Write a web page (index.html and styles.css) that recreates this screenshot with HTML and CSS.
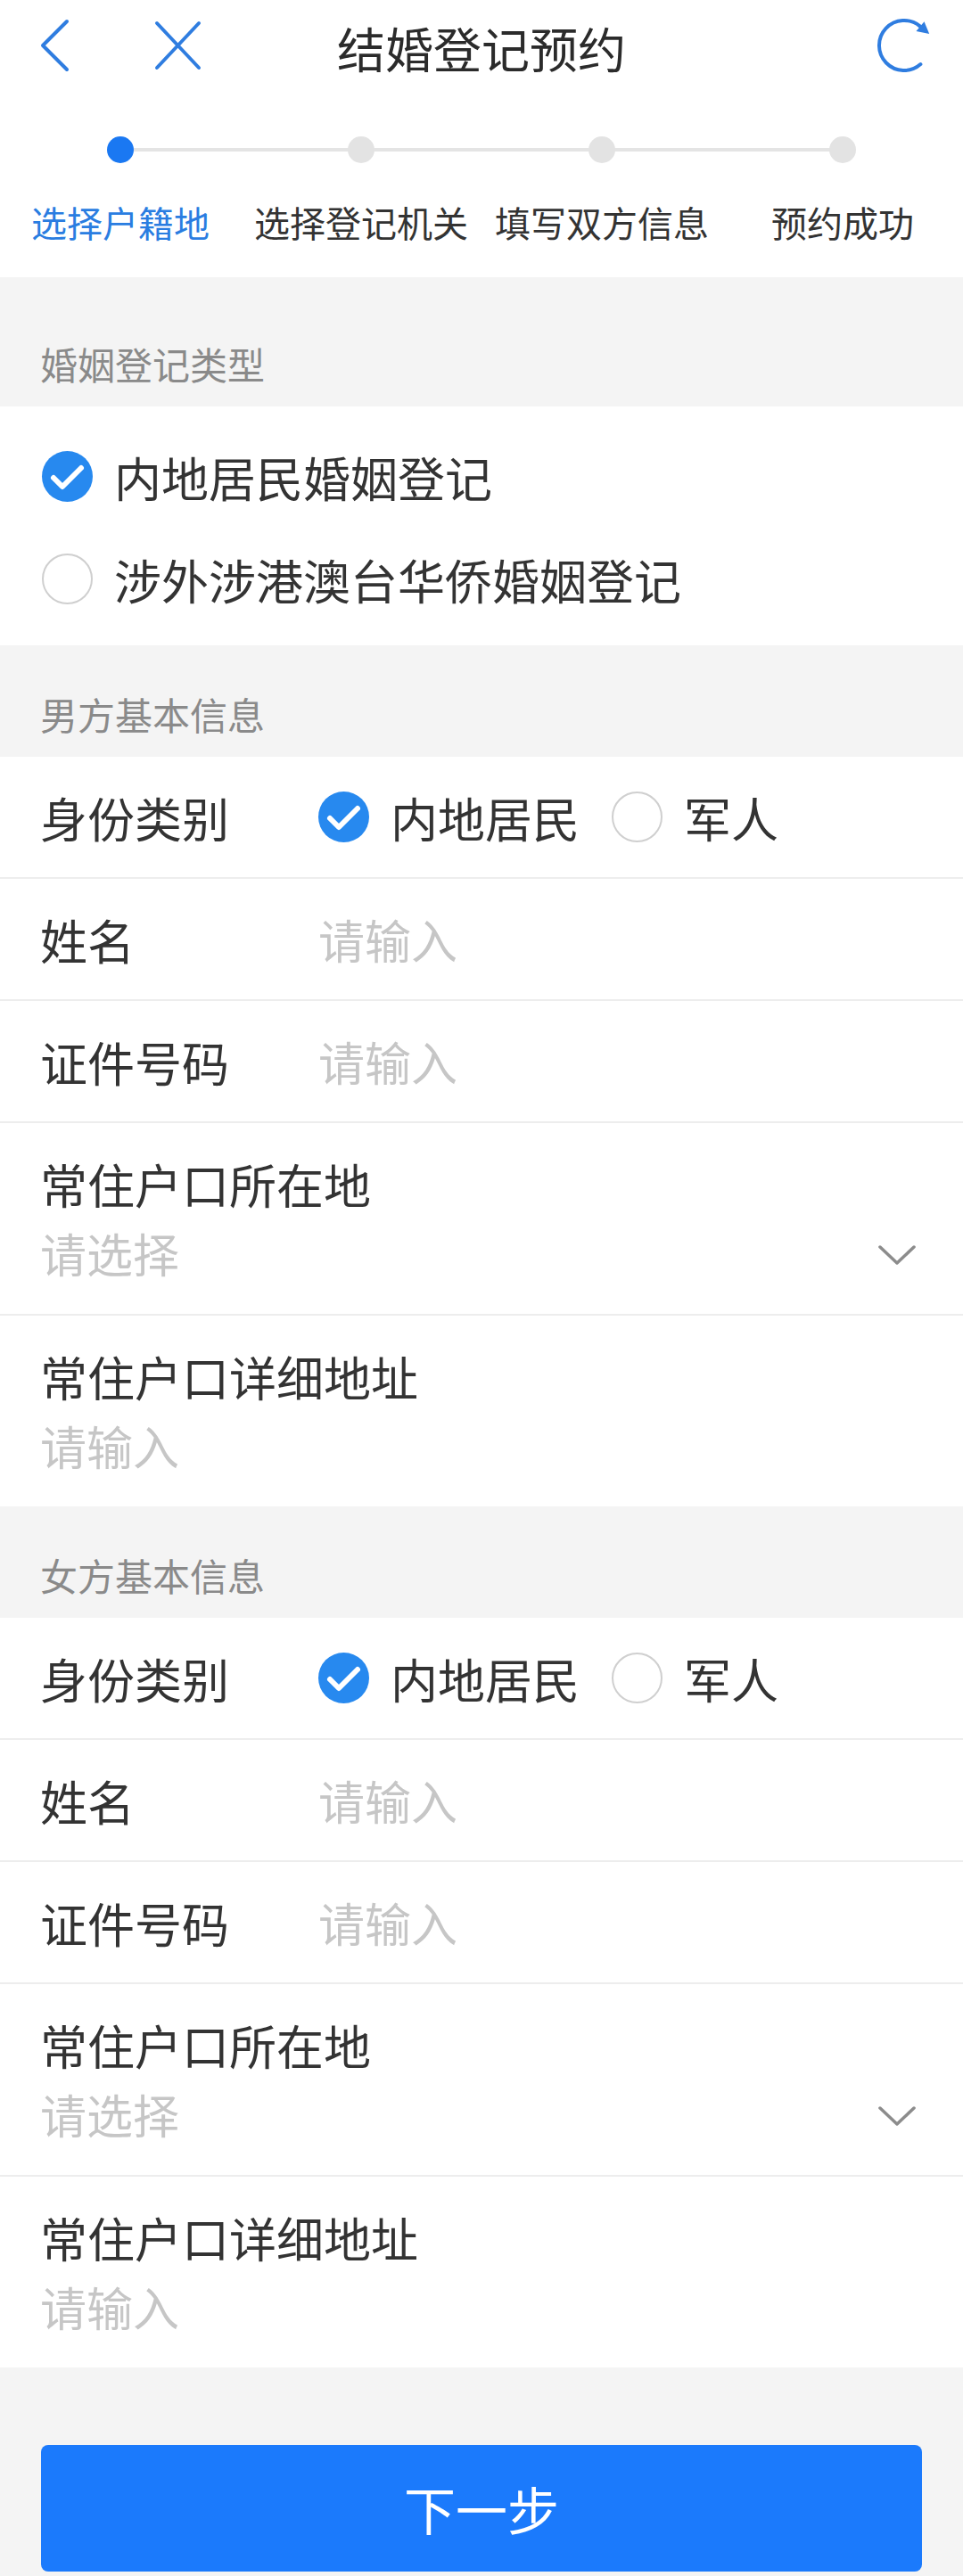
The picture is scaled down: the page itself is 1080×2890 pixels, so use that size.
FILE: index.html
```html
<!DOCTYPE html>
<html lang="zh-CN">
<head>
<meta charset="utf-8">
<title>结婚登记预约</title>
<link rel="stylesheet" href="styles.css">
</head>
<body>
<div class="page">
  <header class="nav">
    <div class="nav-left">
      <svg class="ic-back" width="36" height="60" viewBox="0 0 36 60"><path d="M31 3 L4 30 L31 57" fill="none" stroke="#2f7de0" stroke-width="4" stroke-linecap="round" stroke-linejoin="round"/></svg>
      <svg class="ic-close" width="58" height="60" viewBox="0 0 58 60"><path d="M6 5 L53 55 M53 5 L6 55" fill="none" stroke="#2f7de0" stroke-width="4" stroke-linecap="round"/></svg>
    </div>
    <h1 class="nav-title">结婚登记预约</h1>
    <div class="nav-right">
      <svg class="ic-refresh" width="64" height="64" viewBox="0 0 64 64"><path d="M50.4 53.1 A28 28 0 1 1 50 10.6" fill="none" stroke="#2f7de0" stroke-width="4" stroke-linecap="round"/><polygon points="45.5,16 54.5,5.2 60.2,19" fill="#2f7de0"/></svg>
    </div>
  </header>

  <section class="steps">
    <div class="step active"><span class="dot"></span><span class="step-label">选择户籍地</span></div>
    <div class="step"><span class="dot"></span><span class="step-label">选择登记机关</span></div>
    <div class="step"><span class="dot"></span><span class="step-label">填写双方信息</span></div>
    <div class="step"><span class="dot"></span><span class="step-label">预约成功</span></div>
  </section>

  <div class="sec-head first">婚姻登记类型</div>
  <div class="panel options">
    <div class="opt">
      <span class="radio checked"><svg width="57" height="57" viewBox="0 0 57 57"><path d="M13 30 L23 40 L44 19" fill="none" stroke="#fff" stroke-width="6" stroke-linecap="round" stroke-linejoin="round"/></svg></span>
      <span class="opt-text">内地居民婚姻登记</span>
    </div>
    <div class="opt">
      <span class="radio"></span>
      <span class="opt-text">涉外涉港澳台华侨婚姻登记</span>
    </div>
  </div>

  <div class="sec-head">男方基本信息</div>
  <div class="panel">
    <div class="row">
      <span class="lbl">身份类别</span>
      <div class="choices">
        <span class="radio checked"><svg width="57" height="57" viewBox="0 0 57 57"><path d="M13 30 L23 40 L44 19" fill="none" stroke="#fff" stroke-width="6" stroke-linecap="round" stroke-linejoin="round"/></svg></span>
        <span class="choice-text">内地居民</span>
        <span class="radio second"></span>
        <span class="choice-text">军人</span>
      </div>
    </div>
    <div class="row"><span class="lbl">姓名</span><span class="ph">请输入</span></div>
    <div class="row"><span class="lbl">证件号码</span><span class="ph">请输入</span></div>
    <div class="row tall">
      <div class="lbl-line">常住户口所在地</div>
      <div class="line2"><span class="ph">请选择</span><svg class="chev" width="42" height="24" viewBox="0 0 42 24"><path d="M2 3 L21 21 L40 3" fill="none" stroke="#8c8c8c" stroke-width="3.5" stroke-linecap="round" stroke-linejoin="round"/></svg></div>
    </div>
    <div class="row tall last">
      <div class="lbl-line">常住户口详细地址</div>
      <div class="line2"><span class="ph">请输入</span></div>
    </div>
  </div>

  <div class="sec-head">女方基本信息</div>
  <div class="panel">
    <div class="row">
      <span class="lbl">身份类别</span>
      <div class="choices">
        <span class="radio checked"><svg width="57" height="57" viewBox="0 0 57 57"><path d="M13 30 L23 40 L44 19" fill="none" stroke="#fff" stroke-width="6" stroke-linecap="round" stroke-linejoin="round"/></svg></span>
        <span class="choice-text">内地居民</span>
        <span class="radio second"></span>
        <span class="choice-text">军人</span>
      </div>
    </div>
    <div class="row"><span class="lbl">姓名</span><span class="ph">请输入</span></div>
    <div class="row"><span class="lbl">证件号码</span><span class="ph">请输入</span></div>
    <div class="row tall">
      <div class="lbl-line">常住户口所在地</div>
      <div class="line2"><span class="ph">请选择</span><svg class="chev" width="42" height="24" viewBox="0 0 42 24"><path d="M2 3 L21 21 L40 3" fill="none" stroke="#8c8c8c" stroke-width="3.5" stroke-linecap="round" stroke-linejoin="round"/></svg></div>
    </div>
    <div class="row tall last">
      <div class="lbl-line">常住户口详细地址</div>
      <div class="line2"><span class="ph">请输入</span></div>
    </div>
  </div>

  <div class="footer">
    <button class="btn-next" type="button">下一步</button>
  </div>
</div>
</body>
</html>
```

FILE: styles.css
```css
* {
  box-sizing: border-box;
}

html, body {
  margin: 0;
  padding: 0;
}

body {
  background: #f4f4f4;
  font-family: "Noto Sans CJK SC", "Noto Sans", sans-serif;
  color: #333333;
}

.page {
  width: 1080px;
}

/* ---------- nav ---------- */
.nav {
  height: 110px;
  background: #ffffff;
  display: grid;
  grid-template-columns: 1fr auto 1fr;
  align-items: start;
  padding-top: 21px;
}

.nav-left {
  display: flex;
  align-items: center;
  padding-left: 44px;
  gap: 90px;
}

.nav-left svg,
.nav-right svg {
  display: block;
}

.nav-title {
  margin: 0;
  margin-top: 1px;
  font-size: 54px;
  line-height: 64px;
  font-weight: 400;
  color: #2b2b2b;
}

.nav-right {
  display: flex;
  justify-content: flex-end;
  padding-right: 34px;
  margin-top: -2px;
}

/* ---------- steps ---------- */
.steps {
  background: #ffffff;
  display: grid;
  grid-template-columns: repeat(4, 1fr);
  padding-top: 43px;
  padding-bottom: 36px;
}

.step {
  position: relative;
  display: flex;
  flex-direction: column;
  align-items: center;
}

.step:not(:last-child)::after {
  content: "";
  position: absolute;
  top: 13px;
  left: 50%;
  width: 100%;
  height: 4px;
  background: #e4e4e4;
}

.dot {
  position: relative;
  z-index: 1;
  width: 30px;
  height: 30px;
  border-radius: 50%;
  background: #e3e3e3;
}

.step.active .dot {
  background: #1a78f2;
}

.step-label {
  margin-top: 40px;
  font-size: 40px;
  line-height: 52px;
  color: #333333;
  white-space: nowrap;
}

.step.active .step-label {
  color: #2a7de1;
}

/* ---------- section headers ---------- */
.sec-head {
  padding: 52px 45px 23px;
  font-size: 42px;
  line-height: 50px;
  color: #8a8a8a;
}

.sec-head.first {
  padding-top: 72px;
}

.panel {
  background: #ffffff;
}

/* ---------- marriage type options ---------- */
.options {
  padding: 21px 47px 17px;
}

.opt {
  height: 115px;
  display: flex;
  align-items: center;
  gap: 24px;
}

.opt-text {
  font-size: 53px;
  line-height: 64px;
  color: #333333;
}

.radio {
  flex: none;
  width: 57px;
  height: 57px;
  border-radius: 50%;
  border: 2px solid #cfcfcf;
  background: #ffffff;
  display: flex;
  align-items: center;
  justify-content: center;
}

.radio.checked {
  border: none;
  background: #2789ef;
}

.radio svg {
  display: block;
}

/* ---------- form rows ---------- */
.row {
  height: 137px;
  display: flex;
  align-items: center;
  padding-left: 45px;
  border-bottom: 2px solid #ededed;
}

.lbl {
  flex: none;
  width: 312px;
  font-size: 53px;
  line-height: 64px;
  color: #333333;
}

.ph {
  font-size: 52px;
  line-height: 64px;
  color: #c6c6c6;
}

.choices {
  display: flex;
  align-items: center;
}

.choice-text {
  margin-left: 24px;
  font-size: 53px;
  line-height: 64px;
  color: #333333;
}

.radio.second {
  margin-left: 36px;
}

.row.tall {
  height: auto;
  display: block;
  padding: 29px 53px 29px 45px;
}

.row.last {
  border-bottom: none;
}

.lbl-line {
  font-size: 53px;
  line-height: 78px;
  color: #333333;
}

.line2 {
  height: 78px;
  display: flex;
  align-items: center;
  justify-content: space-between;
}

.line2 .ph {
  line-height: 78px;
}

.chev {
  display: block;
  margin-top: 4px;
}

/* ---------- footer ---------- */
.footer {
  padding: 87px 46px 40px;
}

.btn-next {
  display: block;
  width: 100%;
  height: 142px;
  border: none;
  border-radius: 8px;
  background: #1b7afc;
  color: #ffffff;
  font-family: "Noto Sans CJK SC", "Noto Sans", sans-serif;
  font-size: 58px;
  line-height: 142px;
  padding: 0;
}
```
